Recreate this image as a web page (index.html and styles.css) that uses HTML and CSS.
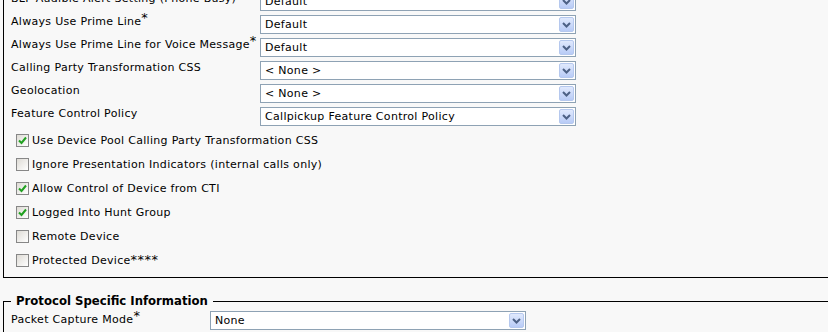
FILE: index.html
```html
<!DOCTYPE html>
<html lang="en">
<head>
    <meta charset="UTF-8">
    <title>Phone Configuration</title>
    <link rel="stylesheet" href="styles.css">
</head>
<body>
    <div class="page">
        <!-- device information -->
        <fieldset class="group group-device">
            <div class="field-row">
                <label class="field-label">BLF Audible Alert Setting (Phone Busy)</label>
                <div class="select"><span class="select-text">Default</span><span class="select-btn"><svg width="9" height="6" viewBox="0 0 9 6"><path d="M1 1 L4.5 4.5 L8 1" fill="none" stroke="#4d6185" stroke-width="2"/></svg></span></div>
            </div>
            <div class="field-row">
                <label class="field-label">Always Use Prime Line<sup class="req">*</sup></label>
                <div class="select"><span class="select-text">Default</span><span class="select-btn"><svg width="9" height="6" viewBox="0 0 9 6"><path d="M1 1 L4.5 4.5 L8 1" fill="none" stroke="#4d6185" stroke-width="2"/></svg></span></div>
            </div>
            <div class="field-row">
                <label class="field-label">Always Use Prime Line for Voice Message<sup class="req">*</sup></label>
                <div class="select"><span class="select-text">Default</span><span class="select-btn"><svg width="9" height="6" viewBox="0 0 9 6"><path d="M1 1 L4.5 4.5 L8 1" fill="none" stroke="#4d6185" stroke-width="2"/></svg></span></div>
            </div>
            <div class="field-row">
                <label class="field-label">Calling Party Transformation CSS</label>
                <div class="select"><span class="select-text">&lt; None &gt;</span><span class="select-btn"><svg width="9" height="6" viewBox="0 0 9 6"><path d="M1 1 L4.5 4.5 L8 1" fill="none" stroke="#4d6185" stroke-width="2"/></svg></span></div>
            </div>
            <div class="field-row">
                <label class="field-label">Geolocation</label>
                <div class="select"><span class="select-text">&lt; None &gt;</span><span class="select-btn"><svg width="9" height="6" viewBox="0 0 9 6"><path d="M1 1 L4.5 4.5 L8 1" fill="none" stroke="#4d6185" stroke-width="2"/></svg></span></div>
            </div>
            <div class="field-row">
                <label class="field-label">Feature Control Policy</label>
                <div class="select"><span class="select-text">Callpickup Feature Control Policy</span><span class="select-btn"><svg width="9" height="6" viewBox="0 0 9 6"><path d="M1 1 L4.5 4.5 L8 1" fill="none" stroke="#4d6185" stroke-width="2"/></svg></span></div>
            </div>

            <div class="check-list">
                <label class="check"><span class="box"><svg width="9" height="9" viewBox="0 0 9 9"><path d="M1 4.5 L3.5 7 L8 1.5" fill="none" stroke="#21a121" stroke-width="2"/></svg></span>Use Device Pool Calling Party Transformation CSS</label>
                <label class="check"><span class="box"></span>Ignore Presentation Indicators (internal calls only)</label>
                <label class="check"><span class="box"><svg width="9" height="9" viewBox="0 0 9 9"><path d="M1 4.5 L3.5 7 L8 1.5" fill="none" stroke="#21a121" stroke-width="2"/></svg></span>Allow Control of Device from CTI</label>
                <label class="check"><span class="box"><svg width="9" height="9" viewBox="0 0 9 9"><path d="M1 4.5 L3.5 7 L8 1.5" fill="none" stroke="#21a121" stroke-width="2"/></svg></span>Logged Into Hunt Group</label>
                <label class="check"><span class="box"></span>Remote Device</label>
                <label class="check"><span class="box"></span>Protected Device<sup class="req">****</sup></label>
            </div>
        </fieldset>

        <!-- protocol specific -->
        <fieldset class="group group-protocol">
            <legend class="group-title">Protocol Specific Information</legend>
            <div class="field-row field-row-wide">
                <label class="field-label">Packet Capture Mode<sup class="req">*</sup></label>
                <div class="select"><span class="select-text">None</span><span class="select-btn"><svg width="9" height="6" viewBox="0 0 9 6"><path d="M1 1 L4.5 4.5 L8 1" fill="none" stroke="#4d6185" stroke-width="2"/></svg></span></div>
            </div>
        </fieldset>
    </div>
</body>
</html>
```

FILE: styles.css
```css
html, body {
    margin: 0;
    background-color: #f8f8f8;
    overflow: hidden;
}

body {
    font-family: "DejaVu Sans", Verdana, sans-serif;
    font-size: 11px;
    letter-spacing: 0.3px;
    color: #000;
}

.page {
    width: 1000px;
}

.group {
    margin: 0 0 0 3px;
    border: 1px solid #000;
    padding: 0 0 5px 7px;
    min-width: 0;
}

.group-device {
    margin-top: -20px;
    padding-top: 9px;
}

.group-protocol {
    margin-top: 16px;
    padding-top: 0;
}

.group-title {
    font-weight: bold;
    font-size: 11.7px;
    letter-spacing: 0;
    line-height: 15px;
    padding: 0 5px;
}

.field-row {
    display: flex;
    align-items: flex-start;
    height: 23px;
}

.field-label {
    width: 249px;
    padding-top: 1px;
    line-height: 15px;
    white-space: nowrap;
}

.field-row-wide .field-label {
    width: 199px;
    padding-top: 3px;
}

.req {
    font-size: 13px;
    line-height: 0;
    letter-spacing: 0.5px;
    vertical-align: 3px;
}

.select {
    margin-top: 2px;
    width: 316px;
    height: 19px;
    box-sizing: border-box;
    border: 1px solid #8ea2b4;
    background: #fff;
    display: flex;
    align-items: center;
    padding-left: 4px;
}

.select-text {
    flex: 1;
    white-space: nowrap;
}

.select-btn {
    width: 15px;
    height: 15px;
    margin-right: 1px;
    box-sizing: border-box;
    border: 1px solid #b5c8ee;
    border-radius: 2px;
    background: linear-gradient(#e0e9fd, #b8cbf6);
    display: flex;
    align-items: center;
    justify-content: center;
}

.check-list {
    padding: 0 0 0 5px;
}

.check {
    display: flex;
    align-items: center;
    height: 24px;
    white-space: nowrap;
}

.box {
    width: 11px;
    height: 11px;
    border: 1px solid #878787;
    background: linear-gradient(135deg, #dedbd5, #fff);
    margin-right: 3px;
    display: flex;
    align-items: center;
    justify-content: center;
}
```
